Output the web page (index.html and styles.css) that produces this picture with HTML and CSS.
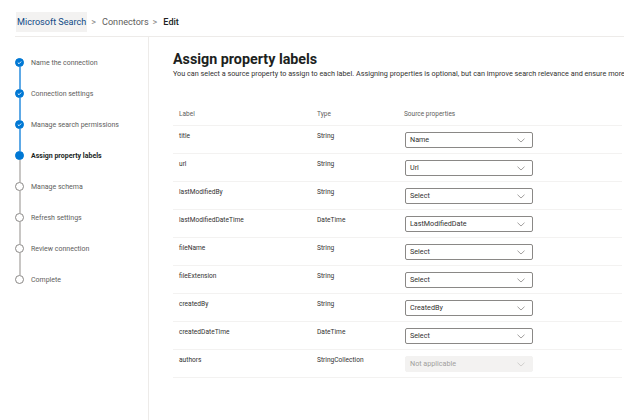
FILE: index.html
```html
<!DOCTYPE html>
<html>
<head>
<meta charset="utf-8">
<link rel="stylesheet" href="styles.css">
</head>
<body>
<div class="page">
  <header class="topbar">
    <nav class="crumbs">
      <span class="crumb crumb-home">Microsoft Search</span>
      <span class="sep">&gt;</span>
      <span class="crumb">Connectors</span>
      <span class="sep">&gt;</span>
      <span class="crumb crumb-current">Edit</span>
    </nav>
  </header>
  <div class="content">
    <aside class="steps">
      <div class="step done"><span class="dot"><svg viewBox="0 0 10 10" width="9" height="9"><path d="M2.6 5.2 L4.3 6.8 L7.4 3.6" fill="none" stroke="#fff" stroke-width="1.3"/></svg></span><span class="step-text">Name the connection</span></div>
      <div class="link done"></div>
      <div class="step done"><span class="dot"><svg viewBox="0 0 10 10" width="9" height="9"><path d="M2.6 5.2 L4.3 6.8 L7.4 3.6" fill="none" stroke="#fff" stroke-width="1.3"/></svg></span><span class="step-text">Connection settings</span></div>
      <div class="link done"></div>
      <div class="step done"><span class="dot"><svg viewBox="0 0 10 10" width="9" height="9"><path d="M2.6 5.2 L4.3 6.8 L7.4 3.6" fill="none" stroke="#fff" stroke-width="1.3"/></svg></span><span class="step-text">Manage search permissions</span></div>
      <div class="link done"></div>
      <div class="step current"><span class="dot"></span><span class="step-text">Assign property labels</span></div>
      <div class="link"></div>
      <div class="step"><span class="dot"></span><span class="step-text">Manage schema</span></div>
      <div class="link"></div>
      <div class="step"><span class="dot"></span><span class="step-text">Refresh settings</span></div>
      <div class="link"></div>
      <div class="step"><span class="dot"></span><span class="step-text">Review connection</span></div>
      <div class="link"></div>
      <div class="step"><span class="dot"></span><span class="step-text">Complete</span></div>
    </aside>
    <main class="main">
      <h1 class="title">Assign property labels</h1>
      <p class="intro">You can select a source property to assign to each label. Assigning properties is optional, but can improve search relevance and ensure more accurate search results.</p>
      <div class="table">
        <div class="row head"><span>Label</span><span>Type</span><span>Source properties</span></div>
        <div class="row"><span>title</span><span>String</span><div class="dd"><span>Name</span><svg class="chev" viewBox="0 0 8 5" width="8" height="5"><path d="M0.5 0.7 L4 4 L7.5 0.7" fill="none" stroke="#8a8886" stroke-width="0.8"/></svg></div></div>
        <div class="row"><span>url</span><span>String</span><div class="dd"><span>Url</span><svg class="chev" viewBox="0 0 8 5" width="8" height="5"><path d="M0.5 0.7 L4 4 L7.5 0.7" fill="none" stroke="#8a8886" stroke-width="0.8"/></svg></div></div>
        <div class="row"><span>lastModifiedBy</span><span>String</span><div class="dd"><span>Select</span><svg class="chev" viewBox="0 0 8 5" width="8" height="5"><path d="M0.5 0.7 L4 4 L7.5 0.7" fill="none" stroke="#8a8886" stroke-width="0.8"/></svg></div></div>
        <div class="row"><span>lastModifiedDateTime</span><span>DateTime</span><div class="dd"><span>LastModifiedDate</span><svg class="chev" viewBox="0 0 8 5" width="8" height="5"><path d="M0.5 0.7 L4 4 L7.5 0.7" fill="none" stroke="#8a8886" stroke-width="0.8"/></svg></div></div>
        <div class="row"><span>fileName</span><span>String</span><div class="dd"><span>Select</span><svg class="chev" viewBox="0 0 8 5" width="8" height="5"><path d="M0.5 0.7 L4 4 L7.5 0.7" fill="none" stroke="#8a8886" stroke-width="0.8"/></svg></div></div>
        <div class="row"><span>fileExtension</span><span>String</span><div class="dd"><span>Select</span><svg class="chev" viewBox="0 0 8 5" width="8" height="5"><path d="M0.5 0.7 L4 4 L7.5 0.7" fill="none" stroke="#8a8886" stroke-width="0.8"/></svg></div></div>
        <div class="row"><span>createdBy</span><span>String</span><div class="dd"><span>CreatedBy</span><svg class="chev" viewBox="0 0 8 5" width="8" height="5"><path d="M0.5 0.7 L4 4 L7.5 0.7" fill="none" stroke="#8a8886" stroke-width="0.8"/></svg></div></div>
        <div class="row"><span>createdDateTime</span><span>DateTime</span><div class="dd"><span>Select</span><svg class="chev" viewBox="0 0 8 5" width="8" height="5"><path d="M0.5 0.7 L4 4 L7.5 0.7" fill="none" stroke="#8a8886" stroke-width="0.8"/></svg></div></div>
        <div class="row"><span>authors</span><span>StringCollection</span><div class="dd disabled"><span>Not applicable</span><svg class="chev" viewBox="0 0 8 5" width="8" height="5"><path d="M0.5 0.7 L4 4 L7.5 0.7" fill="none" stroke="#c8c6c4" stroke-width="0.8"/></svg></div></div>
      </div>
    </main>
  </div>
</div>
</body>
</html>
```

FILE: styles.css
```css
* { box-sizing: border-box; }
html, body { margin: 0; padding: 0; background: #fff; }
body {
  font-family: Roboto, "Open Sans", "Liberation Sans", sans-serif;
  color: #323130;
  width: 624px;
  height: 420px;
  overflow: hidden;
}
.page { display: flex; flex-direction: column; height: 420px; }
.topbar {
  height: 37px;
  margin-left: 15px;
  border-bottom: 1px solid #edebe9;
  padding-top: 12px;
}
.crumbs { display: flex; align-items: center; font-size: 9.1px; color: #605e5c; }
.crumb-home {
  background: #f3f2f1;
  height: 20px;
  line-height: 20px;
  padding: 0 1px;
  color: #0f4a85;
  margin-left: 1px;
}
.sep { margin: 0 6px 0 4px; color: #8a8886; font-size: 9px; }
.crumb-current { color: #201f1e; font-weight: 500; }
.content { flex: 1; display: flex; }
.steps {
  width: 149px;
  border-right: 1px solid #edebe9;
  padding: 21px 0 0 15px;
  display: flex;
  flex-direction: column;
}
.step { display: flex; align-items: center; height: 9px; font-size: 7px; color: #605e5c; }
.dot {
  width: 9px; height: 9px; border-radius: 50%;
  border: 1px solid #8a8886;
  display: flex; align-items: center; justify-content: center;
  flex: none;
  background: #fff;
}
.step.done .dot, .step.current .dot { background: #0078d4; border-color: #0078d4; }
.step.done .dot svg { display: block; }
.step-text { margin-left: 7px; white-space: nowrap; }
.step.current .step-text { font-weight: 700; color: #201f1e; }
.link { width: 2px; height: 22px; margin-left: 3.5px; background: #c8c6c4; }
.link.done { background: #5ea9e6; }
.main { flex: 1; padding: 13px 0 0 24px; overflow: hidden; }
.title { font-size: 14.3px; font-weight: 700; margin: 0; line-height: 18px; color: #201f1e; }
.intro { font-size: 7.25px; line-height: 10px; margin: 1px 0 0; white-space: nowrap; color: #323130; }
.table { margin-top: 21px; margin-right: 2px; }
.row {
  display: grid;
  grid-template-columns: 138px 87px 1fr;
  padding-left: 6px;
  height: 28px;
  border-bottom: 1px solid #f3f2f1;
  font-size: 6.6px;
  line-height: 10px;
  color: #323130;
}
.row > span { padding-top: 5px; }
.row.head { height: 26px; color: #605e5c; font-size: 6.5px; }
.row.head > span { padding-top: 9px; }
.dd {
  margin-top: 6px;
  margin-left: 1px;
  width: 128px;
  height: 16px;
  border: 1px solid #8a8886;
  border-radius: 2px;
  display: flex;
  align-items: center;
  justify-content: space-between;
  padding: 0 7px 0 4px;
  font-size: 7.2px;
}
.dd.disabled { background: #f3f2f1; border-color: #f3f2f1; color: #a19f9d; }
.chev { display: block; }
```
